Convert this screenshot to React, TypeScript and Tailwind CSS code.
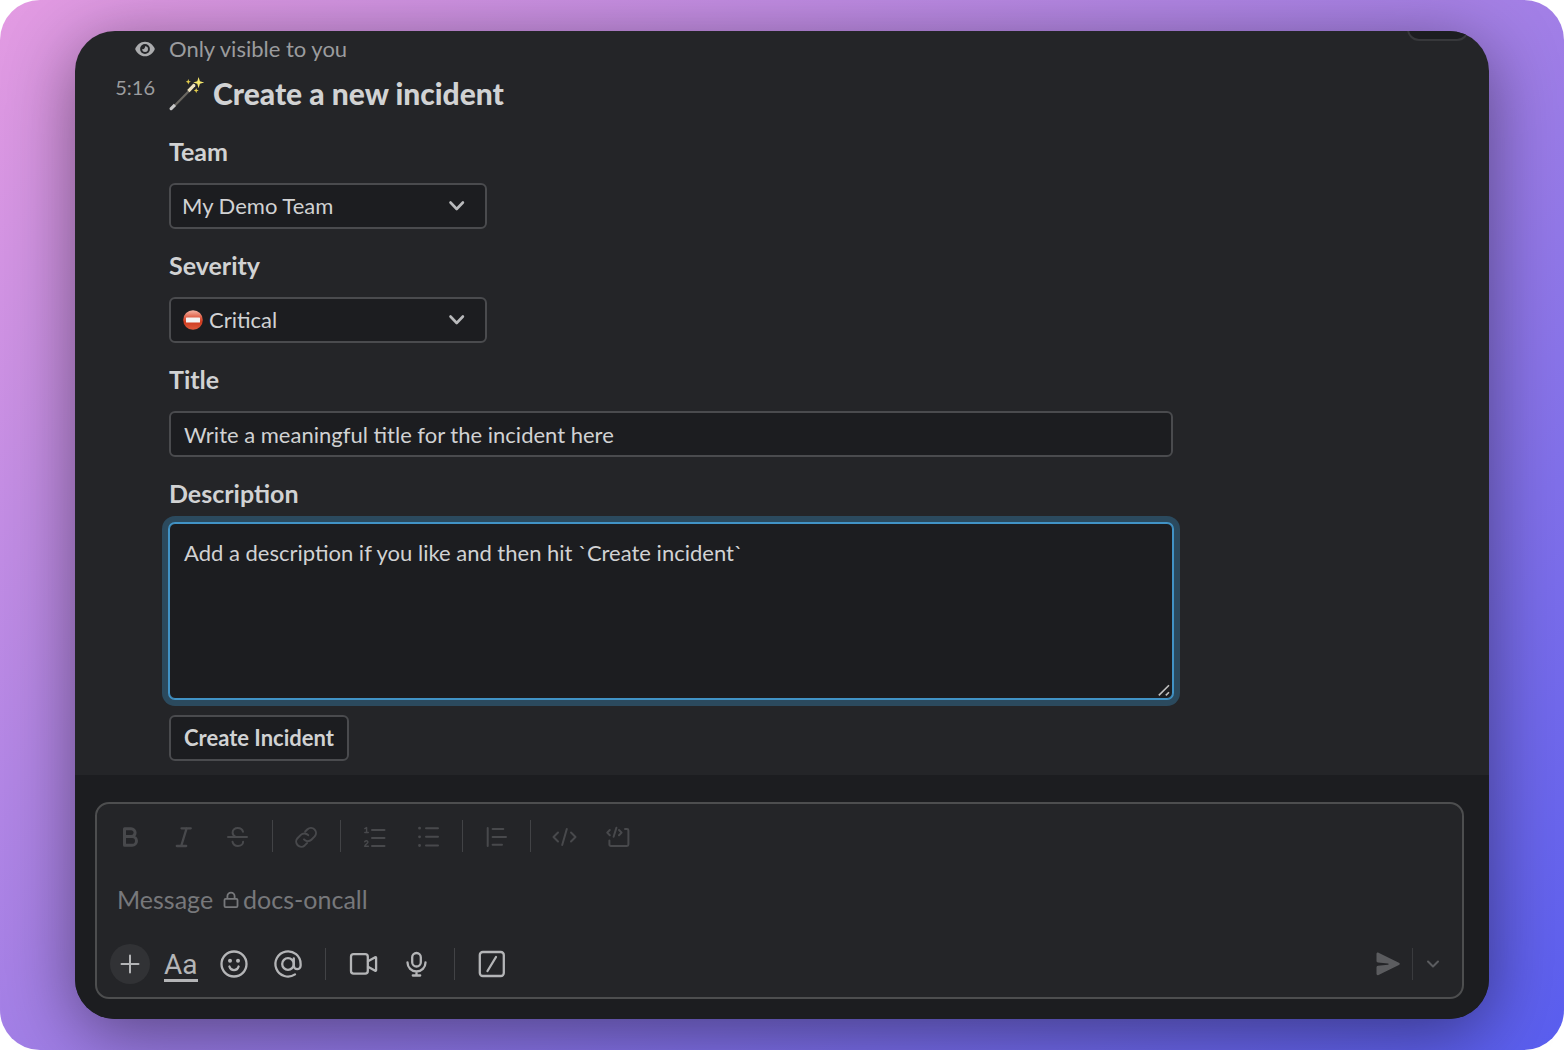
import type {ReactNode} from 'react';

const fieldClass =
  'h-[46px] w-full rounded-md border-2 border-[#4a4b4e] bg-[#1c1d20] text-[22px] leading-7 text-[#d1d2d3] outline-none';

function Icon({children, stroke = 2}: {children: ReactNode; stroke?: number}) {
  return (
    <svg
      aria-hidden="true"
      className="h-8 w-8 shrink-0"
      fill="none"
      stroke="currentColor"
      strokeLinecap="round"
      strokeLinejoin="round"
      strokeWidth={stroke}
      viewBox="0 0 32 32"
    >
      {children}
    </svg>
  );
}

function ToolButton({label, children}: {label: string; children: ReactNode}) {
  return (
    <button aria-label={label} className="grid h-full w-10 place-items-center" type="button">
      {children}
    </button>
  );
}

function Divider() {
  return <span className="-mr-px h-8 w-px bg-[#424346]" />;
}

function WandIcon() {
  return (
    <svg aria-hidden="true" className="h-9 w-9 shrink-0" viewBox="0 0 36 36">
      <defs>
        <linearGradient id="wand" x1="0" x2="1" y1="0" y2="1">
          <stop offset="0" stopColor="#8d8a82" />
          <stop offset="0.5" stopColor="#6a6761" />
          <stop offset="1" stopColor="#1b1b1b" />
        </linearGradient>
      </defs>
      <path d="M3.800 31 19.500 15l1.600 1.600L5.400 32.600z" fill="url(#wand)" />
      <path d="M.8 32.800 4.800 28.800l2.200 2.200-4 4c-1.500 1-3.200-.8-2.200-2.200z" fill="#c9c9c9" />
      <path d="M18.200 15 24 9c1.200-.8 3 1 2.200 2.200l-5.600 6z" fill="#efe3bf" />
      <path d="m29.600 2 1.300 4.300 4.300 1.200-4.300 1.200-1.300 4.600-1.300-4.600-4-1.200 4-1.200z" fill="#f6e86c" />
      <path d="m19.300 4 .7 2 1.900.7-1.900.7-.7 2.200-.7-2.200-1.800-.7 1.800-.7z" fill="#e5cf4d" />
      <path d="m27.200 13 .7 1.800 1.800.7-1.800.7-.7 2-.7-2-1.700-.7 1.700-.7z" fill="#e5cf4d" />
    </svg>
  );
}

function NoEntryIcon() {
  return (
    <svg
      aria-hidden="true"
      className="pointer-events-none absolute top-1/2 left-3.5 h-5 w-5 -translate-y-1/2"
      viewBox="0 0 20 20"
    >
      <defs>
        <linearGradient id="no-entry" x1="0" x2="0" y1="0" y2="1">
          <stop offset="0" stopColor="#f5b5a5" />
          <stop offset="0.35" stopColor="#e0634b" />
          <stop offset="0.6" stopColor="#cf3b1f" />
          <stop offset="1" stopColor="#dd5a3c" />
        </linearGradient>
      </defs>
      <circle cx="10" cy="10" fill="url(#no-entry)" r="9.8" />
      <rect fill="#f4f4f4" height="5" rx="0.6" width="14" x="3" y="7.5" />
    </svg>
  );
}

function SelectField({
  id,
  label,
  value,
  icon
}: {
  id: string;
  label: string;
  value: string;
  icon?: ReactNode;
}) {
  return (
    <div className="grid gap-[18px]">
      <FieldLabel id={id}>{label}</FieldLabel>
      <div className="relative max-w-[318px]">
        <select
          className={`${fieldClass} appearance-none ${icon ? 'pl-[38px]' : 'pl-[11px]'}`}
          defaultValue={value}
          id={id}
        >
          <option>{value}</option>
        </select>
        {icon}
        <svg
          aria-hidden="true"
          className="pointer-events-none absolute top-1/2 right-5 h-5 w-5 -translate-y-1/2"
          fill="none"
          stroke="#b9babc"
          strokeLinecap="round"
          strokeLinejoin="round"
          strokeWidth="2.6"
          viewBox="0 0 20 20"
        >
          <path d="m3.500 6.500 6.200 6.500 6.200-6.500" />
        </svg>
      </div>
    </div>
  );
}

function FieldLabel({id, children}: {id: string; children: ReactNode}) {
  return (
    <label className="text-[25px] leading-7 font-bold text-[#d1d2d3]" htmlFor={id}>
      {children}
    </label>
  );
}

function Composer() {
  return (
    <div className="rounded-[14px] border-2 border-[#4d4e4f] bg-[#242528] px-[13px] pt-4 pb-[13px]">
      <div className="flex h-8 items-center gap-[14px] text-[#48494c]">
        <ToolButton label="Bold">
          <Icon stroke={3}>
            <path d="M10.500 8.800h6.700a3.900 3.900 0 0 1 0 7.800h-6.700zM10.500 16.600h7.700a4.300 4.300 0 0 1 0 8.600h-7.700z" />
          </Icon>
        </ToolButton>
        <ToolButton label="Italic">
          <Icon stroke={2.3}>
            <path d="M13.500 8.300h9.300M8.800 26h9.400M18.600 8.300 13.200 26" />
          </Icon>
        </ToolButton>
        <ToolButton label="Strikethrough">
          <Icon>
            <path d="M6 17h19M21 11.800C20.400 9.400 18.400 8 15.800 8c-3 0-5.200 1.800-5.200 4.500 0 1.900 1 3.400 3 4.300M10.500 21.800c.6 2.600 2.700 4.200 5.400 4.200 3 0 5.200-1.700 5.200-4.200" />
          </Icon>
        </ToolButton>
        <Divider />
        <ToolButton label="Link">
          <Icon>
            <path d="M14 19.400a5.100 5.100 0 0 0 7.400.3l3.300-3.300a5.100 5.100 0 0 0-7.200-7.200l-2.300 2.300M18.200 15.200a5.100 5.100 0 0 0-7.400-.3l-3.300 3.300a5.100 5.100 0 0 0 7.200 7.200l2.300-2.300" />
          </Icon>
        </ToolButton>
        <Divider />
        <ToolButton label="Ordered list">
          <Icon>
            <path d="M14 10h12.500M14 18h12.500M14 26h12.500" />
            <path
              d="M6.800 8.600 8.600 7.500v5M6.800 12.500h3.500M6.700 21.800c.4-1.500 3.400-1.300 3.200.4-.1 1.200-2.900 2-3.200 4.100h3.700"
              strokeWidth="1.4"
            />
          </Icon>
        </ToolButton>
        <ToolButton label="Bulleted list">
          <Icon>
            <path d="M14 8.200h12M14 16.800h12M14 25.500h12" />
            <path d="M7.500 8.200h.1M7.500 16.800h.1M7.500 25.500h.1" strokeWidth="2.8" />
          </Icon>
        </ToolButton>
        <Divider />
        <ToolButton label="Blockquote">
          <Icon>
            <path d="M7.700 8v18M12.600 9h10.700M12.600 17H26M12.600 24.800h9.400" />
          </Icon>
        </ToolButton>
        <Divider />
        <ToolButton label="Code">
          <Icon>
            <path d="m10 12.500-4.500 4.500 4.500 4.500M23 12.500l4.500 4.500-4.500 4.500M18.800 9l-4.600 16" />
          </Icon>
        </ToolButton>
        <ToolButton label="Code block">
          <Icon>
            <path d="M7.800 10 5.200 12.600l2.600 2.600M17 10l2.600 2.600-2.600 2.600M14.400 7.800l-2.800 9M23 9h2a1.400 1.400 0 0 1 1.400 1.400v14.200A1.400 1.400 0 0 1 25 26H8.800a1.400 1.400 0 0 1-1.400-1.400V20.500" />
          </Icon>
        </ToolButton>
      </div>

      <label className="relative mt-[31px] flex h-8 cursor-text items-center pl-[7px] text-[25px] leading-8 text-[#77787b]">
        <span>Message</span>
        <svg
          aria-hidden="true"
          className="mr-1 ml-2.5 h-[18px] w-4"
          fill="none"
          stroke="currentColor"
          strokeLinejoin="round"
          strokeWidth="1.8"
          viewBox="0 0 16 18"
        >
          <rect height="8.2" rx="1.2" width="13" x="1.5" y="8.9" />
          <path d="M4.400 8.900V6.200a3.600 3.600 0 0 1 7.200 0v2.700" />
        </svg>
        <span>docs-oncall</span>
        <input className="absolute inset-0 bg-transparent pl-[7px] text-[#d1d2d3] outline-none" type="text" />
      </label>

      <div className="mt-[29px] flex h-10 items-center gap-[14px] text-[#b4b5b7]">
        <button
          aria-label="Attach"
          className="grid h-10 w-10 place-items-center rounded-full bg-[#313235]"
          type="button"
        >
          <Icon>
            <path d="M16 7.500v17M7.500 16h17" />
          </Icon>
        </button>
        <button className="grid w-9 justify-items-start pt-1 font-['Roboto',sans-serif] text-[28px]" type="button">
          <span className="border-b-[3px] border-current leading-7">Aa</span>
        </button>
        <ToolButton label="Emoji">
          <Icon stroke={2.3}>
            <circle cx="16" cy="16" r="12.5" />
            <path d="M11.400 18.500c.8 2.600 2.500 3.700 4.600 3.700s3.800-1.100 4.600-3.700" />
            <circle cx="12" cy="12.7" fill="currentColor" r="2" stroke="none" />
            <circle cx="20" cy="12.7" fill="currentColor" r="2" stroke="none" />
          </Icon>
        </ToolButton>
        <ToolButton label="Mention">
          <Icon stroke={2.3}>
            <circle cx="16" cy="16" r="5.8" />
            <path d="M21.800 10.500v7.300a3.400 3.400 0 0 0 6.800 0V16A12.600 12.600 0 1 0 23 26.400" />
          </Icon>
        </ToolButton>
        <span className="mx-[3px] h-8 w-px bg-[#424346]" />
        <ToolButton label="Record video">
          <Icon stroke={2.3}>
            <rect height="19.5" rx="2.6" width="16.8" x="4" y="6.2" />
            <path d="m21 13.200 7.200-4a.6.6 0 0 1 .9.5v12.600a.6.6 0 0 1-.9.5l-7.200-4" />
          </Icon>
        </ToolButton>
        <ToolButton label="Record audio">
          <Icon stroke={2.3}>
            <rect height="13.5" rx="4.3" width="8.6" x="11.2" y="5" />
            <path d="M6.500 14.500a9 9 0 0 0 18 0M15.500 23.500V27.500M11.800 27.500h7.400" />
          </Icon>
        </ToolButton>
        <span className="mx-[3px] h-8 w-px bg-[#424346]" />
        <ToolButton label="Shortcuts">
          <Icon stroke={2.3}>
            <rect height="24" rx="3" width="24" x="3.8" y="4" />
            <path d="m20 9-8.500 14" />
          </Icon>
        </ToolButton>

        <div className="ml-auto flex items-center text-[#5b5c5f]">
          <button aria-label="Send" type="button">
            <Icon>
              <path
                d="M4.500 6c0-1.200 1-1.800 2-1.300l20.400 10c1.200.6 1.200 1.600 0 2.200L6.500 27.100c-1 .5-2-.1-2-1.300v-6.300c0-1 .5-1.600 1.500-1.800l10-1c.9-.2.9-1 0-1.200l-10-1c-1-.2-1.500-.8-1.500-1.800z"
                fill="currentColor"
                stroke="none"
              />
            </Icon>
          </button>
          <span className="mr-1 ml-2 h-8 w-px bg-[#3a3b3e]" />
          <button aria-label="Schedule for later" type="button">
            <Icon>
              <path d="m11 13.500 5 5 5-5" />
            </Icon>
          </button>
        </div>
      </div>
    </div>
  );
}

export default function App() {
  return (
    <div className="bg-white font-['Lato',sans-serif]">
      <div className="flex min-h-screen rounded-[40px] bg-[linear-gradient(to_bottom_right,#e39be2_0%,#a27fe6_50%,#595eef_100%)] px-[75px] py-[31px]">
        <main className="relative flex flex-1 flex-col overflow-hidden rounded-[40px] bg-[#242528] shadow-[0_14px_70px_rgba(0,0,0,0.45)]">
          <div
            aria-hidden="true"
            className="absolute -top-6 right-5 h-[34px] w-[62px] rounded-xl border-2 border-[#37383b] bg-[#1c1d20]"
          />

          <section className="flex-1 pt-1.5 pr-8 pb-[13px]">
            <div className="flex items-center gap-[14px] text-[22px] leading-6 text-[#9b9c9e]">
              <div className="flex w-20 justify-end">
                <svg aria-hidden="true" className="h-5 w-5" viewBox="0 0 20 20">
                  <path
                    d="M10 2.700c4.800 0 8 3.500 9.500 6.300.3.600.3 1.400 0 2C18 13.800 14.800 17.300 10 17.300S2 13.800.5 11c-.3-.6-.3-1.400 0-2C2 6.200 5.200 2.700 10 2.700z"
                    fill="#abacae"
                  />
                  <circle cx="10" cy="10" fill="#242528" r="4.9" />
                  <path d="M10 7.200A2.900 2.900 0 1 1 7.200 10c1.700.6 3-.8 2.800-2.800z" fill="#abacae" />
                </svg>
              </div>
              <p>Only visible to you</p>
            </div>

            <div className="mt-3 flex gap-[14px]">
              <time className="w-20 text-right text-[20px] leading-7 text-[#9b9c9e]">5:16</time>
              <form className="max-w-[1004px] flex-1" onSubmit={(event) => event.preventDefault()}>
                <h1 className="flex h-10 items-center gap-2 text-[30px] leading-10 font-black text-[#d1d2d3]">
                  <WandIcon />
                  Create a new incident
                </h1>

                <div className="mt-6 grid gap-[22px]">
                  <SelectField id="team" label="Team" value="My Demo Team" />
                  <SelectField icon={<NoEntryIcon />} id="severity" label="Severity" value="Critical" />

                  <div className="grid gap-[18px]">
                    <FieldLabel id="title">Title</FieldLabel>
                    <input
                      className={`${fieldClass} px-[13px]`}
                      defaultValue="Write a meaningful title for the incident here"
                      id="title"
                      type="text"
                    />
                  </div>

                  <div className="grid gap-4">
                    <FieldLabel id="description">Description</FieldLabel>
                    <div className="relative">
                      <textarea
                        className="block h-[176px] w-full resize-none rounded-md border border-[#4193c6] bg-[#1c1d20] px-[14px] py-[15px] text-[22px] leading-7 text-[#d1d2d3] shadow-[0_0_0_1px_#4193c6,0_0_0_7px_#2b4a5e] outline-none"
                        defaultValue="Add a description if you like and then hit `Create incident`"
                        id="description"
                      />
                      <svg
                        aria-hidden="true"
                        className="pointer-events-none absolute right-[3px] bottom-[3px] h-3 w-3"
                        fill="none"
                        stroke="#c0c0c0"
                        strokeWidth="1.6"
                        viewBox="0 0 12 12"
                      >
                        <path d="M.8 11.400 11 1.200M7.800 11.400 11 8.200" />
                      </svg>
                    </div>
                  </div>
                </div>

                <button
                  className="mt-4 h-[46px] rounded-md border-2 border-[#4a4b4e] bg-[#1c1d20] px-[13px] text-[22px] leading-7 font-bold text-[#d1d2d3]"
                  type="submit"
                >
                  Create Incident
                </button>
              </form>
            </div>
          </section>

          <footer className="bg-[#1c1d20] pt-[27px] pr-[25px] pb-5 pl-5">
            <Composer />
          </footer>
        </main>
      </div>
    </div>
  );
}
